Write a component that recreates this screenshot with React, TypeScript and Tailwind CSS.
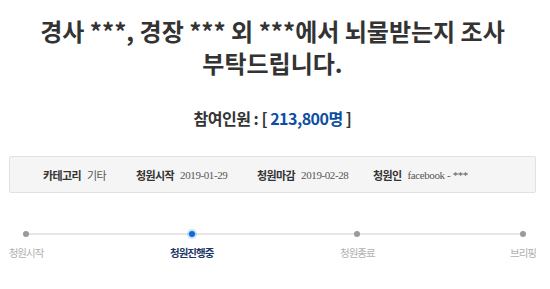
export default function App() {
  const steps = [
    { label: '청원시작', active: false },
    { label: '청원진행중', active: true },
    { label: '청원종료', active: false },
    { label: '브리핑', active: false },
  ]

  const serif = { fontFamily: '"Liberation Serif", serif' }

  return (
    <div
      className="w-[550px] h-[289px] bg-white overflow-hidden"
      style={{ fontFamily: '"Noto Sans CJK KR", "Noto Sans", sans-serif' }}
    >
      <div className="ml-[9px] w-[527px]">
        {/* Title */}
        <h1 className="pt-[15px] text-center text-[24px] leading-[32px] font-bold text-[#333]">
          경사 ***, 경장 *** 외 ***에서 뇌물받는지 조사
          <br />
          부탁드립니다.
        </h1>

        {/* Participants */}
        <p className="mt-[27px] text-center text-[16px] leading-[24px] font-bold tracking-[-0.5px] text-[#333]">
          참여인원 : [ <span className="text-[#0b4ea2]">213,800명</span> ]
        </p>

        {/* Info box */}
        <div className="mt-[26px] h-[37px] flex items-center pl-[33px] pt-[2px] text-[11px] tracking-[-0.6px] bg-[#f5f5f5] border border-[#e1e1e1] rounded-[2px]">
          <div className="flex items-center w-[93px]">
            <span className="font-bold text-[#333]">카테고리</span>
            <span className="ml-[6px] text-[#555]">기타</span>
          </div>
          <div className="flex items-center w-[121px]">
            <span className="font-bold text-[#333]">청원시작</span>
            <span className="ml-[6px] text-[#555] tracking-[-0.4px]" style={serif}>2019-01-29</span>
          </div>
          <div className="flex items-center w-[116px]">
            <span className="font-bold text-[#333]">청원마감</span>
            <span className="ml-[6px] text-[#555] tracking-[-0.4px]" style={serif}>2019-02-28</span>
          </div>
          <div className="flex items-center">
            <span className="font-bold text-[#333]">청원인</span>
            <span className="ml-[6px] text-[#555] tracking-[-0.4px]" style={serif}>facebook - ***</span>
          </div>
        </div>

        {/* Progress */}
        <div className="relative mt-[38px] ml-[17px] mr-[13px] h-[40px]">
          <div className="absolute left-0 right-0 top-[2px] h-[2px] bg-[#e6e6e6]" />
          <div className="relative flex justify-between">
            {steps.map((s) => (
              <div key={s.label} className="relative w-0 flex flex-col items-center">
                {s.active ? (
                  <div className="w-[6px] h-[6px] rounded-full bg-[#0a6ad8] shadow-[0_0_0_2px_rgba(10,106,216,0.2)]" />
                ) : (
                  <div className="w-[6px] h-[6px] rounded-full bg-[#9a9a9a]" />
                )}
                <span
                  className={
                    'mt-[8px] whitespace-nowrap text-[10.5px] leading-[16px] tracking-[-1px] ' +
                    (s.active ? 'font-bold text-[#1c3766]' : 'text-[#b0b0b0]')
                  }
                >
                  {s.label}
                </span>
              </div>
            ))}
          </div>
        </div>
      </div>
    </div>
  )
}
